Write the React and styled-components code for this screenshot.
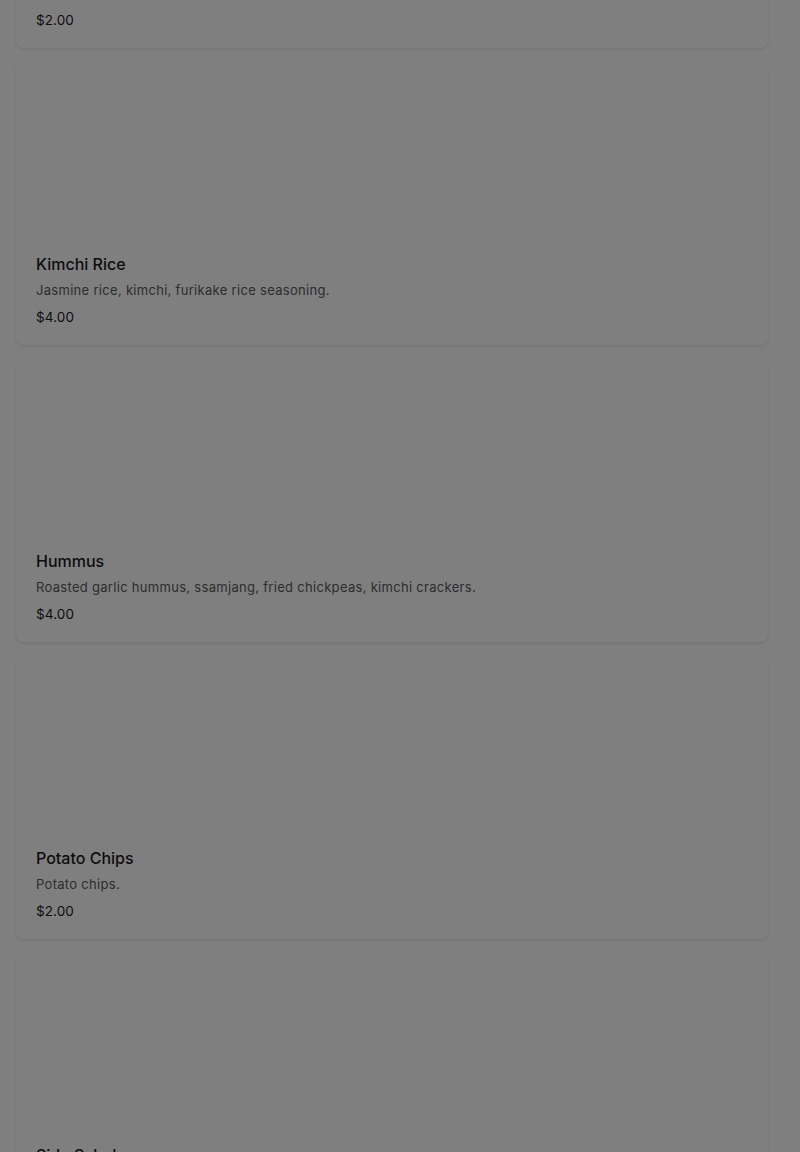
import React from 'react';
import styled, { createGlobalStyle } from 'styled-components';

const GlobalStyle = createGlobalStyle`
  * { box-sizing: border-box; }
  body {
    margin: 0;
    background: #fff;
    font-family: Inter, "Noto Sans", Arial, sans-serif;
    overflow: hidden;
  }
`;

const Page = styled.div`
  height: 1152px;
  overflow: hidden;
`;

// list is scrolled: first card sits mostly above the viewport
const MenuList = styled.div`
  display: flex;
  flex-direction: column;
  gap: 15px;
  padding: 0 32px 0 16px;
  margin-top: -207px;
`;

const Card = styled.div`
  background: #fff;
  border-radius: 8px;
  box-shadow: 0 1px 4px rgba(0, 0, 0, 0.08), 0 2px 2px rgba(0, 0, 0, 0.03);
  overflow: hidden;
`;

const Photo = styled.div`
  height: 177px;
  background: #fff;
`;

const Body = styled.div`
  padding: 12px 20px 18px;
`;

const Title = styled.h3`
  margin: 0 0 4px;
  font-size: 16px;
  line-height: 24px;
  font-weight: 500;
  letter-spacing: 0;
  color: #1a1a1a;
`;

const Description = styled.p`
  margin: 0 0 7px;
  font-size: 13px;
  line-height: 20px;
  letter-spacing: 0.3px;
  color: #5a5a5a;
`;

const Price = styled.div`
  font-size: 13.5px;
  line-height: 20px;
  letter-spacing: 0.1px;
  color: #1a1a1a;
`;

const Overlay = styled.div`
  position: fixed;
  inset: 0;
  background: rgba(0, 0, 0, 0.5);
`;

const items = [
  { name: 'Pickles', price: '$2.00' },
  { name: 'Kimchi Rice', desc: 'Jasmine rice, kimchi, furikake rice seasoning.', price: '$4.00' },
  { name: 'Hummus', desc: 'Roasted garlic hummus, ssamjang, fried chickpeas, kimchi crackers.', price: '$4.00' },
  { name: 'Potato Chips', desc: 'Potato chips.', price: '$2.00' },
  { name: 'Side Salad', desc: 'Mixed greens, sesame dressing.', price: '$4.00' },
];

const App = () => (
  <Page>
    <GlobalStyle />
    <MenuList>
      {items.map((item) => (
        <Card key={item.name}>
          <Photo />
          <Body>
            <Title>{item.name}</Title>
            {item.desc && <Description>{item.desc}</Description>}
            <Price>{item.price}</Price>
          </Body>
        </Card>
      ))}
    </MenuList>
    <Overlay />
  </Page>
);

export default App;
